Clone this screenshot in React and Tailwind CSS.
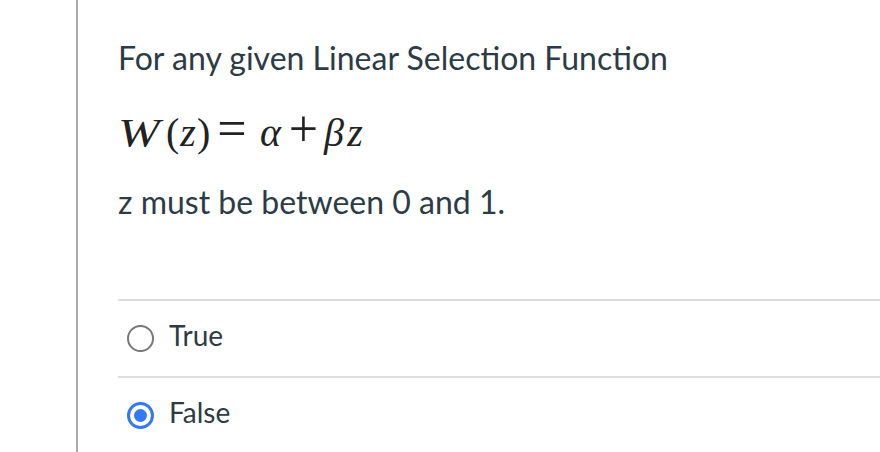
export default function App() {
  const lato = { fontFamily: "Lato, 'Noto Sans', sans-serif" };
  const serif = { fontFamily: "'Liberation Serif', 'DejaVu Serif', serif" };
  return (
    <div className="w-[880px] h-[452px] bg-white overflow-hidden">
      <div className="ml-[76px] h-[452px] border-l-2 border-[#aaaaaa] pl-[40px] text-[#2d3b45]" style={lato}>
        <div className="pt-[39px] text-[32px] leading-[38px] whitespace-nowrap">For any given Linear Selection Function</div>
        <div className="mt-[26px] h-[49px] text-[40px] leading-[48px] whitespace-nowrap text-[#222222]" style={serif}>
          <span className="inline-block w-[48px] leading-none">
            <span className="inline-block italic scale-x-125 origin-left">W</span>
          </span>
          <span className="inline-block w-[13px] leading-none">(</span>
          <span className="inline-block w-[18px] text-center leading-none italic">z</span>
          <span className="inline-block w-[13px] leading-none">)</span>
          <span className="inline-block ml-[7px] w-[30px] text-center text-[52px] leading-none">=</span>
          <span className="inline-block ml-[10px] w-[27px] text-center leading-none italic">α</span>
          <span className="inline-block ml-[4px] w-[31px] text-center text-[52px] leading-none">+</span>
          <span className="inline-block ml-[4px] w-[22px] text-center leading-none italic">β</span>
          <span className="inline-block w-[20px] text-center leading-none italic">z</span>
        </div>
        <div className="mt-[31px] text-[32px] leading-[38px] whitespace-nowrap">z must be between 0 and 1.</div>
        <div className="mt-[78px] h-[2px] bg-[#dddddd]" />
        <div className="h-[75px] flex items-center pl-[9px]">
          <span className="w-[27px] h-[27px] rounded-full border-2 border-[#777777] bg-white" />
          <span className="ml-[15px] mb-[7px] text-[28px] leading-[34px]">True</span>
        </div>
        <div className="h-[2px] bg-[#dddddd]" />
        <div className="h-[75px] flex items-center pl-[9px]">
          <span className="w-[27px] h-[27px] rounded-full border-[3px] border-[#3478f6] bg-white flex items-center justify-center">
            <span className="w-[13px] h-[13px] rounded-full bg-[#3478f6]" />
          </span>
          <span className="ml-[15px] mb-[7px] text-[28px] leading-[34px]">False</span>
        </div>
      </div>
    </div>
  );
}
